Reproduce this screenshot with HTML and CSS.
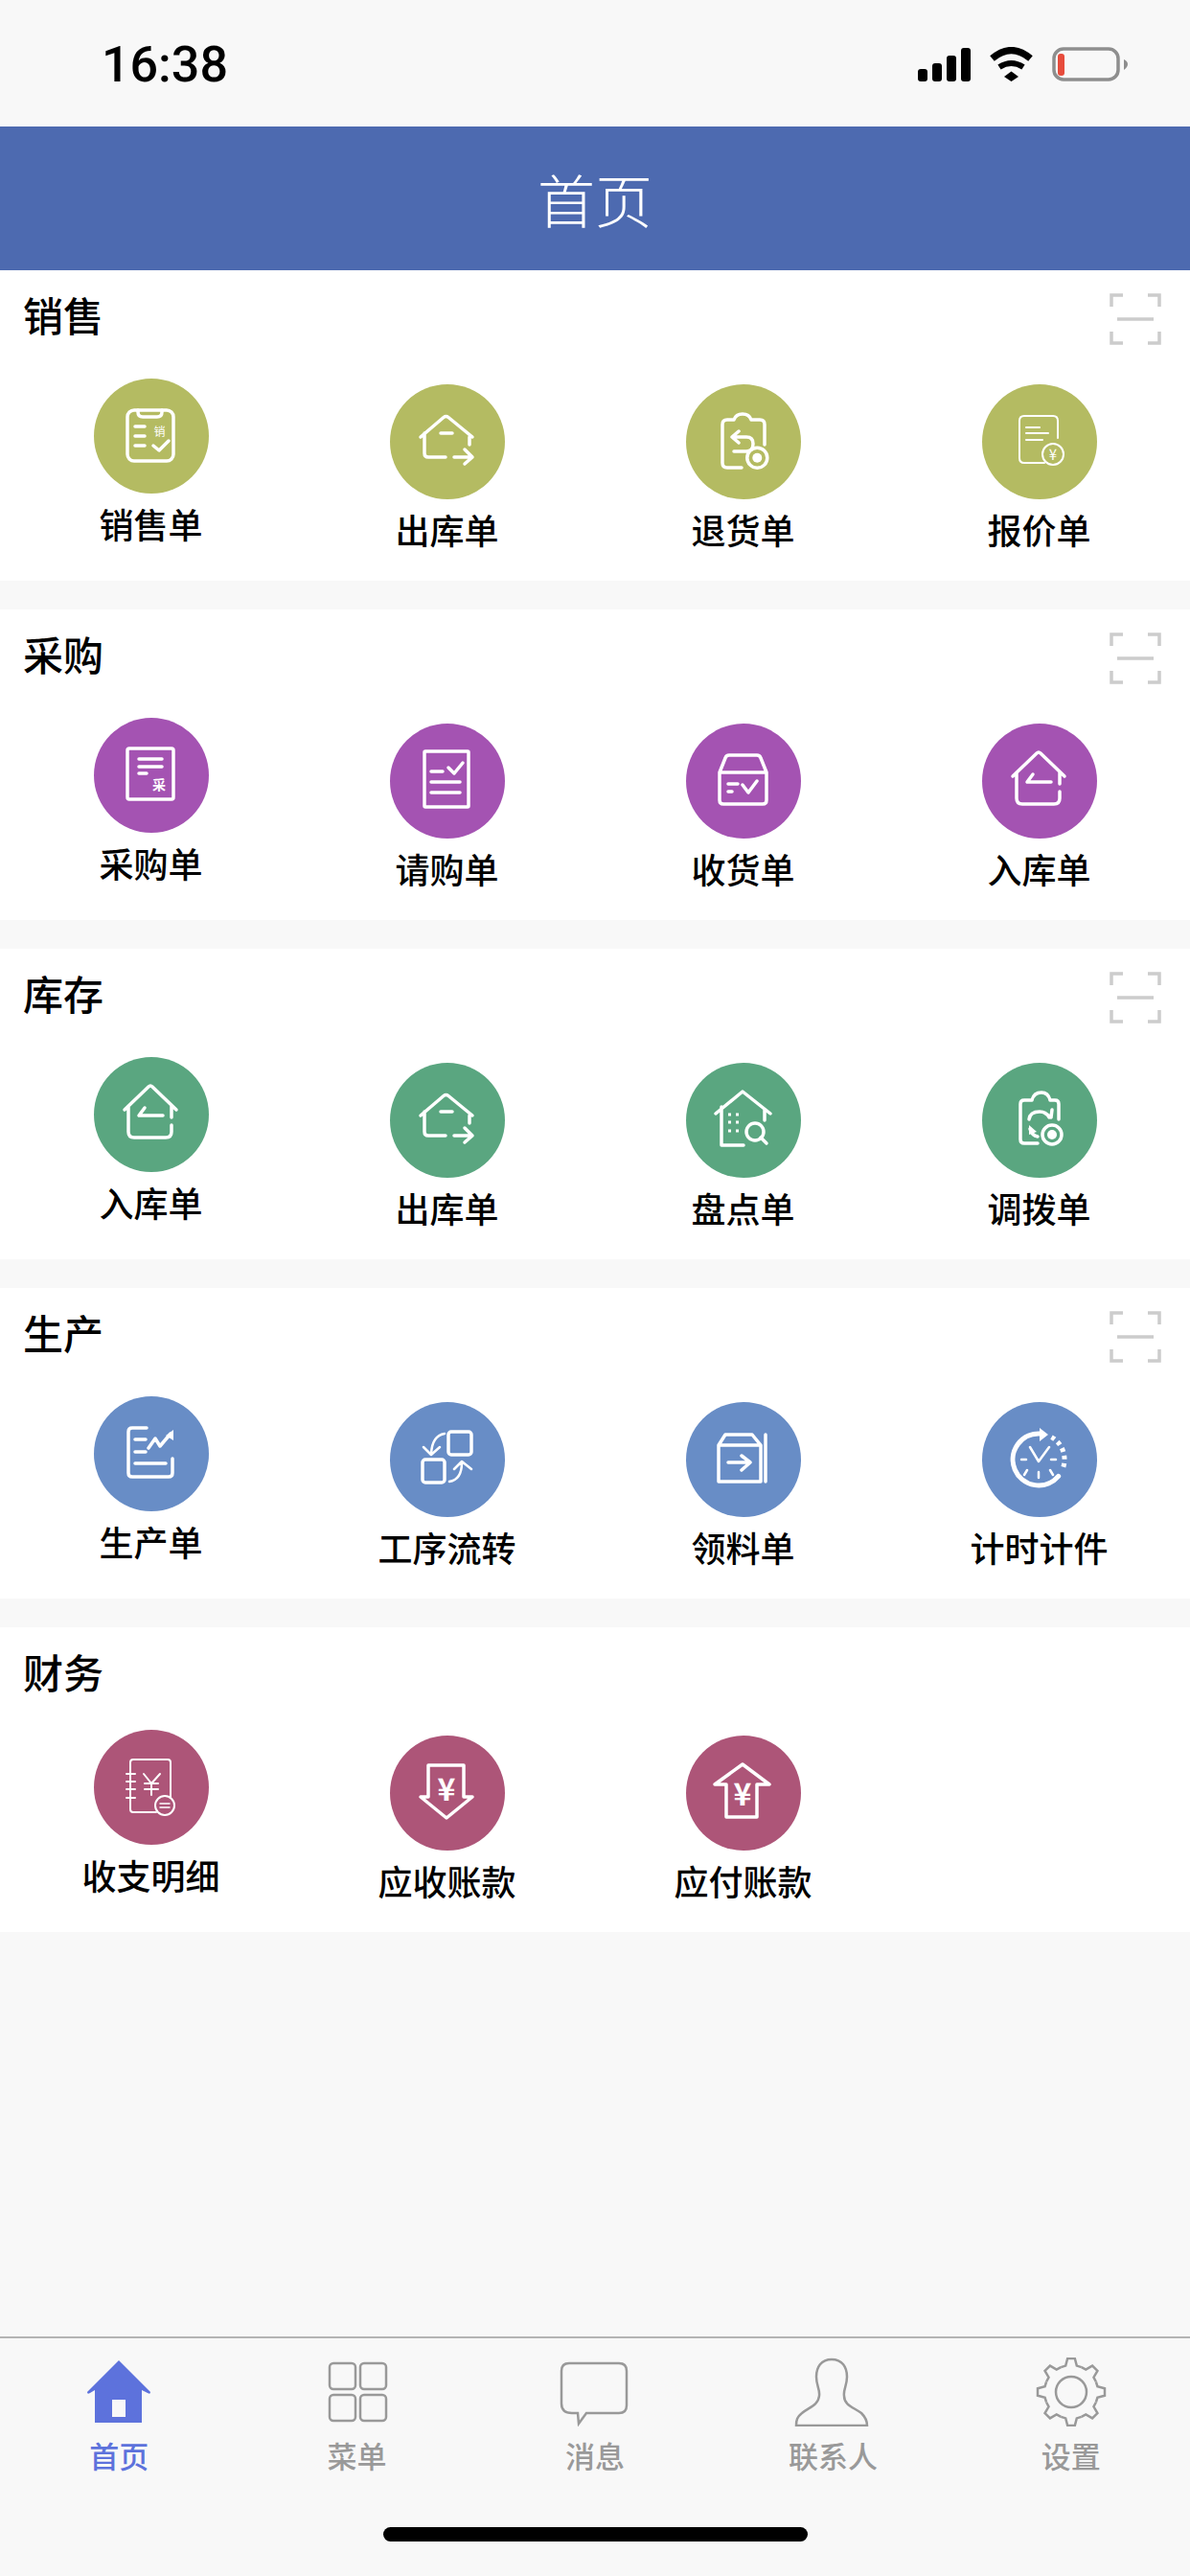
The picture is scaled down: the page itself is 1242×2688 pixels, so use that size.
FILE: index.html
```html
<!DOCTYPE html>
<html lang="zh-CN">
<head>
    <meta charset="UTF-8">
    <meta name="viewport" content="width=device-width, initial-scale=1.0">
    <title>首页</title>
    <link rel="stylesheet" href="styles.css">
</head>
<body>
    <div class="status-bar">
        <span class="time">16:38</span>
        <div class="status-icons">
            <svg width="55" height="36" viewBox="0 0 55 36"><rect x="0" y="23" width="10" height="13" rx="3"/><rect x="15" y="17" width="10" height="19" rx="3"/><rect x="30" y="9" width="10" height="27" rx="3"/><rect x="45" y="1" width="10" height="35" rx="3"/></svg>
            <svg class="wifi" width="47" height="36" viewBox="0 0 47 36"><path d="M3.5 12Q23.5 -5 43.5 12" fill="none" stroke="#000" stroke-width="7"/><path d="M11 21Q23.5 13 36 21" fill="none" stroke="#000" stroke-width="6"/><polygon points="23.5,25.5 31,31 23.5,36 16,31"/></svg>
            <svg width="79" height="36" viewBox="0 0 79 36"><rect x="2" y="2" width="67" height="32" rx="10" fill="none" stroke="#8e8e8e" stroke-width="3.5"/><rect x="6" y="7" width="7" height="23" rx="3" fill="#e74c3c"/><path d="M75 13Q79 15 79 18Q79 21 75 24Z" fill="#8e8e8e"/></svg>
        </div>
    </div>

    <header class="title-bar">首页</header>

    <main class="content">
        <section class="group">
            <div class="group-head">
                <h2>销售</h2>
                <svg class="scan" width="54" height="54" viewBox="0 0 54 54"><path d="M2 14V2H14M40 2H52V14M8 27H46M2 40V52H14M40 52H52V40"/></svg>
            </div>
            <div class="items olive">
                <a class="item lead">
                    <span class="circle"><svg class="ico" viewBox="0 0 120 120"><rect x="35" y="33" width="48" height="53" rx="7"/><path d="M46 33V35Q46 40 51 40H66Q71 40 71 35V33M43 50H53M43 60H53M43 70H53M62 70L68 75L78 65"/><text class="ico-text" x="68.500" y="60" font-size="12">销</text></svg></span>
                    <span class="name">销售单</span>
                </a>
                <a class="item">
                    <span class="circle"><svg class="ico" viewBox="0 0 120 120"><g id="house-out"><path d="M32 55L56 34.500Q58.500 32.500 61 34.500L86 55M36 51V72Q36 76 40 76H58M83 55V63M53 51H65M67 76H86M78 68L86 76L78 83"/></g></svg></span>
                    <span class="name">出库单</span>
                </a>
                <a class="item">
                    <span class="circle"><svg class="ico" viewBox="0 0 120 120"><path d="M58 87H43Q38 87 38 82V42Q38 37 43 37H50Q52 31 59 31Q66 31 68 37H77Q82 37 82 42V63M55 49L48 55L55 61M48 55H63Q70 55 70 62Q70 70 63 70H50"/><circle cx="74.300" cy="76.700" r="10.500"/><circle class="solid" cx="74.300" cy="76.700" r="5"/></svg></span>
                    <span class="name">退货单</span>
                </a>
                <a class="item">
                    <span class="circle"><svg class="ico thin" viewBox="0 0 120 120"><path d="M65 82H44Q39 82 39 77V38Q39 33 44 33H74Q79 33 79 38V56M46 45H60M46 51H69M46 58H63"/><circle cx="74" cy="73" r="11"/><text class="ico-text" x="74" y="78.500" font-size="15">¥</text></svg></span>
                    <span class="name">报价单</span>
                </a>
            </div>
        </section>

        <section class="group">
            <div class="group-head">
                <h2>采购</h2>
                <svg class="scan" width="54" height="54" viewBox="0 0 54 54"><path d="M2 14V2H14M40 2H52V14M8 27H46M2 40V52H14M40 52H52V40"/></svg>
            </div>
            <div class="items purple">
                <a class="item lead">
                    <span class="circle"><svg class="ico" viewBox="0 0 120 120"><rect x="35" y="32" width="48" height="53" rx="2"/><path d="M47 43H71M47 51H71M47 58H55"/><text class="ico-text bold" x="68" y="75" font-size="14">采</text></svg></span>
                    <span class="name">采购单</span>
                </a>
                <a class="item">
                    <span class="circle"><svg class="ico" viewBox="0 0 120 120"><rect x="36" y="29" width="46" height="58" rx="1"/><path d="M43 50H55M61 46L67 52L76 41M43 61H73M43 72H73"/></svg></span>
                    <span class="name">请购单</span>
                </a>
                <a class="item">
                    <span class="circle"><svg class="ico" viewBox="0 0 120 120"><path d="M35 51L41 36Q42 33 45 33H74Q77 33 78 36L84 51V80Q84 84 80 84H39Q35 84 35 80ZM35 51H84M44 63H54M44 71H48M59 64L65 72L74 60"/></svg></span>
                    <span class="name">收货单</span>
                </a>
                <a class="item">
                    <span class="circle"><svg class="ico" viewBox="0 0 120 120"><g id="house-in"><path d="M32 55L57 31Q59 29 61 31L86 55M36 51V78Q36 84 42 84H75Q81 84 81 78V71M81 51V63M53 53L47 61H72"/></g></svg></span>
                    <span class="name">入库单</span>
                </a>
            </div>
        </section>

        <section class="group">
            <div class="group-head">
                <h2>库存</h2>
                <svg class="scan" width="54" height="54" viewBox="0 0 54 54"><path d="M2 14V2H14M40 2H52V14M8 27H46M2 40V52H14M40 52H52V40"/></svg>
            </div>
            <div class="items green">
                <a class="item lead">
                    <span class="circle"><svg class="ico" viewBox="0 0 120 120"><use href="#house-in"/></svg></span>
                    <span class="name">入库单</span>
                </a>
                <a class="item">
                    <span class="circle"><svg class="ico" viewBox="0 0 120 120"><use href="#house-out"/></svg></span>
                    <span class="name">出库单</span>
                </a>
                <a class="item">
                    <span class="circle"><svg class="ico" viewBox="0 0 120 120"><path d="M31 53L59 30L88 53M37 46V86H60M82 49V60"/><path class="dots" d="M44 54H47M52 54H55M44 62H47M52 62H55M44 71H47M52 71H55"/><circle cx="72" cy="72" r="9"/><path d="M78 78L84 84"/></svg></span>
                    <span class="name">盘点单</span>
                </a>
                <a class="item">
                    <span class="circle"><svg class="ico" viewBox="0 0 120 120"><path d="M58 84H44Q40 84 40 80V43Q40 39 44 39H52Q54 31 62 31Q69 31 71 39H76Q80 39 80 43V59M49 59Q50 51 60 51Q67 51 70 57M65 52L72 57L73 49M50 69Q52 76 58 77"/><polygon class="solid" points="49,65 49,75 57,72"/><circle cx="73" cy="75" r="10"/><circle class="solid" cx="73" cy="75" r="5"/></svg></span>
                    <span class="name">调拨单</span>
                </a>
            </div>
        </section>

        <section class="group">
            <div class="group-head">
                <h2>生产</h2>
                <svg class="scan" width="54" height="54" viewBox="0 0 54 54"><path d="M2 14V2H14M40 2H52V14M8 27H46M2 40V52H14M40 52H52V40"/></svg>
            </div>
            <div class="items blue">
                <a class="item lead">
                    <span class="circle"><svg class="ico" viewBox="0 0 120 120"><path d="M55 33H40Q36 33 36 37V80Q36 84 40 84H78Q82 84 82 80V65M43 45H54M43 58H54M43 70H75M57 54L64 44L69 52L80 39"/><polygon class="solid" points="83,35 83,46 75,41"/></svg></span>
                    <span class="name">生产单</span>
                </a>
                <a class="item">
                    <span class="circle"><svg class="ico" viewBox="0 0 120 120"><rect x="61" y="31" width="24" height="24" rx="3"/><rect x="34" y="60" width="23" height="24" rx="3"/><path class="thin-line" d="M57 33Q44 35 43 54M35 47L43 55L52 47M62 83Q75 81 75 63M67 70L75 62L85 70"/></svg></span>
                    <span class="name">工序流转</span>
                </a>
                <a class="item">
                    <span class="circle"><svg class="ico" viewBox="0 0 120 120"><path d="M34 45L41 34H69L78 45V83H34ZM34 45H78M83 34V83M44 63H66M58 56L67 63L58 71"/></svg></span>
                    <span class="name">领料单</span>
                </a>
                <a class="item">
                    <span class="circle"><svg class="ico" viewBox="0 0 120 120"><path class="thick" d="M61 33A27 27 0 1 0 79.700 77.400"/><path class="thick dash" d="M72.500 36.600A27 27 0 0 1 84.400 69.200"/><polygon class="solid" points="60,27 69,34 60,41"/><path class="thin-line" d="M50 47L59 62L70 47M41 60H46M72 60H77M59 73V79M47 71L44 76M71 71L74 76"/></svg></span>
                    <span class="name">计时计件</span>
                </a>
            </div>
        </section>

        <section class="group">
            <div class="group-head">
                <h2>财务</h2>
            </div>
            <div class="items rose">
                <a class="item lead">
                    <span class="circle"><svg class="ico thin" viewBox="0 0 120 120"><path d="M65 86H41Q38 86 38 83V34Q38 31 41 31H77Q80 31 80 34V70M34 46H43M34 54H43M34 62H43M34 71H43M52 46L60 56L69 46M60 56V68M53 56H67M53 62H67"/><circle cx="74" cy="79" r="10"/><path class="hair" d="M69 77H79M69 81H79"/></svg></span>
                    <span class="name">收支明细</span>
                </a>
                <a class="item">
                    <span class="circle"><svg class="ico" viewBox="0 0 120 120"><path d="M40 31H77V64H86L59 86L32 64H40Z"/><text class="ico-text bold" x="59" y="68" font-size="32">¥</text></svg></span>
                    <span class="name">应收账款</span>
                </a>
                <a class="item">
                    <span class="circle"><svg class="ico" viewBox="0 0 120 120"><path d="M59 30L87 51H74V85H42V51H30Z"/><text class="ico-text bold" x="59" y="73" font-size="32">¥</text></svg></span>
                    <span class="name">应付账款</span>
                </a>
            </div>
        </section>
    </main>

    <footer class="tab-bar">
        <nav class="tabs">
            <a class="tab active">
                <svg class="tab-icon" viewBox="0 0 80 72"><path d="M40 3L73 36Q73 39 70 37L64 34V68H15V34L10 37Q7 39 7 36Z"/><rect x="33" y="44" width="14" height="18" fill="#f8f8f8"/></svg>
                <span>首页</span>
            </a>
            <a class="tab">
                <svg class="tab-icon line" viewBox="0 0 80 72"><rect x="11" y="6" width="27" height="27" rx="4"/><rect x="43" y="6" width="27" height="27" rx="4"/><rect x="11" y="39" width="27" height="27" rx="4"/><rect x="43" y="39" width="27" height="27" rx="4"/></svg>
                <span>菜单</span>
            </a>
            <a class="tab">
                <svg class="tab-icon line" viewBox="0 0 80 72"><path d="M13 6H65Q73 6 73 14V50Q73 58 65 58H31L23 69L22 58H16Q5 58 5 48V14Q5 6 13 6Z"/></svg>
                <span>消息</span>
            </a>
            <a class="tab">
                <svg class="tab-icon line" viewBox="0 0 80 72"><path d="M39 2C28 2 23 10 23 20C23 30 27 33 26 40C25 50 15 52 8 58C3 62 2 65 2 71H76C76 65 74 62 70 58C62 52 52 50 52 40C51 33 55 30 55 20C55 10 50 2 39 2Z"/></svg>
                <span>联系人</span>
            </a>
            <a class="tab">
                <svg class="tab-icon line" viewBox="0 0 80 72">
                    <path id="tooth" d="M29.300 10.100L34.200 8.600L36.200 1H43.800L45.800 8.600L50.700 10.100"/>
                    <use href="#tooth" transform="rotate(45 40 36)"/>
                    <use href="#tooth" transform="rotate(90 40 36)"/>
                    <use href="#tooth" transform="rotate(135 40 36)"/>
                    <use href="#tooth" transform="rotate(180 40 36)"/>
                    <use href="#tooth" transform="rotate(225 40 36)"/>
                    <use href="#tooth" transform="rotate(270 40 36)"/>
                    <use href="#tooth" transform="rotate(315 40 36)"/>
                    <circle cx="40" cy="36" r="16"/>
                </svg>
                <span>设置</span>
            </a>
        </nav>
        <div class="home-bar"></div>
    </footer>
</body>
</html>
```

FILE: styles.css
```css
* {
    box-sizing: border-box;
}
body {
    font-family: "Noto Sans CJK SC", "Noto Sans", sans-serif;
    background-color: #f8f8f8;
    margin: 0;
    width: 1242px;
    height: 2688px;
    display: flex;
    flex-direction: column;
    color: #000;
}

/* status bar */
.status-bar {
    height: 132px;
    padding: 2px 65px 0 106px;
    display: flex;
    justify-content: space-between;
    align-items: center;
}
.time {
    font-family: Roboto, sans-serif;
    font-size: 52px;
    font-weight: 500;
}
.status-icons {
    display: flex;
    align-items: center;
    gap: 19px;
}

.title-bar {
    height: 150px;
    padding-bottom: 2px;
    background-color: #4d6ab0;
    color: #fff;
    font-size: 60px;
    font-weight: 300;
    display: flex;
    justify-content: center;
    align-items: center;
}

/* sections */
.content {
    flex: 1;
    display: flex;
    flex-direction: column;
    gap: 30px;
}
.group {
    background: #fff;
    padding: 24px 3px 29px;
}
.group-head {
    display: flex;
    justify-content: space-between;
    align-items: flex-start;
    padding: 0 27px 35px 21px;
}
.group-head h2 {
    margin: 0;
    padding-bottom: 4px;
    font-size: 42px;
    font-weight: 500;
    line-height: 44px;
}
.scan {
    fill: none;
    stroke: #ccc;
    stroke-width: 3.5;
}
.items {
    display: grid;
    grid-template-columns: repeat(4, 309px);
}
.item {
    margin-top: 6px;
    display: flex;
    flex-direction: column;
    align-items: center;
}
.item.lead {
    margin-top: 0;
}
.circle {
    width: 120px;
    height: 120px;
    border-radius: 50%;
    display: block;
}
.olive .circle { background-color: #b4bb62; }
.purple .circle { background-color: #a453b2; }
.green .circle { background-color: #5aa680; }
.blue .circle { background-color: #688dc6; }
.rose .circle { background-color: #ad5578; }

.name {
    margin-top: 6px;
    font-size: 36px;
    font-weight: 500;
    line-height: 50px;
}

/* circle icons */
.ico {
    display: block;
    width: 120px;
    height: 120px;
    fill: none;
    stroke: #fff;
    stroke-width: 3.5;
    stroke-linecap: round;
    stroke-linejoin: round;
}
.ico.thin {
    stroke-width: 2;
}
.ico .solid {
    fill: #fff;
    stroke: none;
}
.ico .thin-line {
    stroke-width: 2.5;
}
.ico .thick {
    stroke-width: 5;
}
.ico .hair {
    stroke-width: 1.5;
}
.ico .dots {
    stroke-width: 3;
    stroke-linecap: butt;
}
.ico .dash {
    stroke-dasharray: 4 4;
    stroke-linecap: butt;
}
.ico-text {
    fill: #fff;
    stroke: none;
    text-anchor: middle;
    font-family: "Noto Sans CJK SC", sans-serif;
}
.ico-text.bold {
    font-weight: 700;
}

/* bottom tabs */
.tab-bar {
    height: 250px;
    border-top: 2px solid #b4b4b4;
    padding-top: 20px;
    display: flex;
    flex-direction: column;
    align-items: center;
}
.tabs {
    width: 100%;
    display: grid;
    grid-template-columns: repeat(5, 1fr);
}
.tab {
    display: flex;
    flex-direction: column;
    align-items: center;
    gap: 10px;
    color: #999;
    font-size: 31px;
    font-weight: 500;
    line-height: 40px;
}
.tab.active {
    color: #5d72dc;
}
.tab-icon {
    width: 80px;
    height: 72px;
    fill: #5d72dc;
}
.tab-icon.line {
    fill: none;
    stroke: #999;
    stroke-width: 2.5;
}
.home-bar {
    width: 443px;
    height: 15px;
    margin-top: 55px;
    background: #000;
    border-radius: 8px;
}
```
